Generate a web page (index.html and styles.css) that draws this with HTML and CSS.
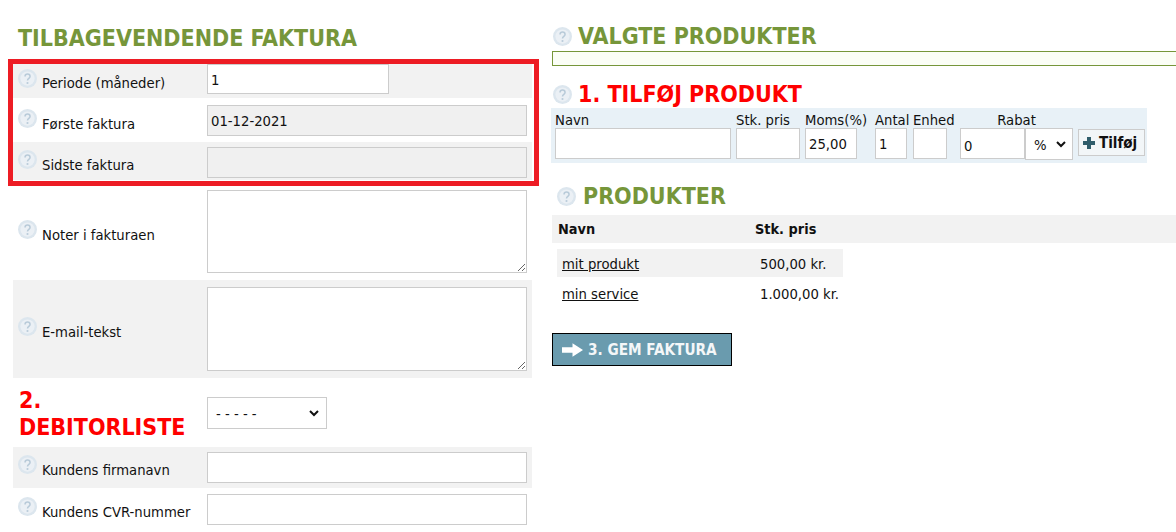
FILE: index.html
```html
<!DOCTYPE html>
<html lang="da">
  <head>
    <meta charset="UTF-8" />
    <meta name="viewport" content="width=device-width, initial-scale=1.0" />
    <title>Tilbagevendende faktura</title>
    <link rel="stylesheet" href="styles.css">
  </head>
  <body>
    <svg class="defs" width="0" height="0">
      <symbol id="help" viewBox="0 0 20 20">
        <circle cx="10" cy="10" r="10" fill="#dce6ee" />
        <circle cx="10" cy="10" r="7.500" fill="#ebf0f5" />
        <path d="M7.400 7.900c0-3.400 5.300-3.400 5.300 0 0 2-2.700 2-2.700 4.200" fill="none" stroke="#b9cbd9" stroke-width="1.600" />
        <circle cx="10" cy="14.700" r="1.100" fill="#b9cbd9" />
      </symbol>
    </svg>
    <div class="page">
      <div class="left">
        <h2 class="title title-left">TILBAGEVENDENDE FAKTURA</h2>
        <div class="row gray row-1">
          <div class="label"><svg class="help"><use href="#help" /></svg><span>Periode (måneder)</span></div>
          <input class="field field-short" type="text" value="1" />
        </div>
        <div class="row row-2">
          <div class="label"><svg class="help"><use href="#help" /></svg><span>Første faktura</span></div>
          <input class="field locked" type="text" value="01-12-2021" disabled />
        </div>
        <div class="row gray row-3">
          <div class="label"><svg class="help"><use href="#help" /></svg><span>Sidste faktura</span></div>
          <input class="field locked" type="text" disabled />
        </div>
        <div class="row row-4">
          <div class="label"><svg class="help"><use href="#help" /></svg><span>Noter i fakturaen</span></div>
          <textarea class="field area"></textarea>
        </div>
        <div class="row gray row-5">
          <div class="label"><svg class="help"><use href="#help" /></svg><span>E-mail-tekst</span></div>
          <textarea class="field area"></textarea>
        </div>
        <div class="row row-debtor">
          <h2 class="title title-red title-debtor">2. DEBITORLISTE</h2>
          <select class="debtor-select"><option>- - - - -</option></select>
        </div>
        <div class="row gray row-6">
          <div class="label"><svg class="help"><use href="#help" /></svg><span>Kundens firmanavn</span></div>
          <input class="field" type="text" />
        </div>
        <div class="row row-7">
          <div class="label"><svg class="help"><use href="#help" /></svg><span>Kundens CVR-nummer</span></div>
          <input class="field" type="text" />
        </div>
        <div class="red-box"></div>
      </div>

      <div class="right">
        <div class="head head-valgte">
          <svg class="help"><use href="#help" /></svg>
          <h2 class="title">VALGTE PRODUKTER</h2>
        </div>
        <div class="selected-bar"></div>
        <div class="head head-add">
          <svg class="help"><use href="#help" /></svg>
          <h2 class="title title-red">1. TILFØJ PRODUKT</h2>
        </div>
        <div class="add-form">
          <div class="col col-navn"><span>Navn</span><input type="text" /></div>
          <div class="col col-pris"><span>Stk. pris</span><input type="text" /></div>
          <div class="col col-moms"><span>Moms(%)</span><input type="text" value="25,00" /></div>
          <div class="col col-antal"><span>Antal</span><input type="text" value="1" /></div>
          <div class="col col-enhed"><span>Enhed</span><input type="text" /></div>
          <div class="col col-rabat">
            <span>Rabat</span>
            <div class="rabat-inputs">
              <input type="text" value="0" />
              <select class="chevron"><option>%</option></select>
            </div>
          </div>
          <button class="add-btn">
            <svg class="plus" viewBox="0 0 12 12"><path d="M4 0h4v4h4v4H8v4H4V8H0V4h4z" /></svg>
            Tilføj
          </button>
        </div>
        <div class="head head-products">
          <svg class="help"><use href="#help" /></svg>
          <h2 class="title">PRODUKTER</h2>
        </div>
        <div class="products-head">
          <span class="name-col">Navn</span>
          <span>Stk. pris</span>
        </div>
        <div class="product gray">
          <a class="name-col" href="#">mit produkt</a>
          <span>500,00 kr.</span>
        </div>
        <div class="product">
          <a class="name-col" href="#">min service</a>
          <span>1.000,00 kr.</span>
        </div>
        <button class="save-btn">
          <svg class="arrow" viewBox="0 0 22 14"><path d="M0 4h11V0l11 7-11 7v-4H0z" /></svg>
          3. GEM FAKTURA
        </button>
      </div>
    </div>
  </body>
</html>
```

FILE: styles.css
```css
* {
  box-sizing: border-box;
}
body {
  margin: 0;
  background: #fff;
  color: #111;
  font-family: "DejaVu Sans Condensed", "DejaVu Sans", sans-serif;
  font-size: 14.7px;
  height: 532px;
  overflow: hidden;
}
.defs {
  position: absolute;
}
.page {
  display: flex;
}
.left {
  position: relative;
  width: 519px;
  margin-left: 13px;
  flex: none;
}
.right {
  flex: 1;
  margin-left: 20px;
  min-width: 0;
}
.title {
  margin: 0;
  font-size: 23px;
  line-height: 27px;
  font-weight: bold;
  color: #76963a;
}
.title-red {
  color: #f00;
}
.title-left {
  padding: 25px 0 0 5px;
  height: 64px;
}
.help {
  width: 19px;
  height: 19px;
  flex: none;
}

.row {
  display: flex;
  align-items: flex-start;
  padding-left: 194px;
  position: relative;
}
.gray {
  background: #f2f2f2;
}
.label {
  position: absolute;
  left: 5px;
  top: 0;
  bottom: 0;
  display: flex;
  align-items: center;
  gap: 5px;
  padding-top: 5px;
}
.label .help {
  margin-bottom: 8px;
}
.label span {
  padding-top: 1px;
}
.row-1 {
  padding-bottom: 4px;
}
.row-1 .label {
  padding-top: 2px;
}
.row-2 {
  padding-top: 7px;
  padding-bottom: 6px;
}
.row-3 {
  padding-top: 5px;
  padding-bottom: 2px;
}
.row-4 {
  padding-top: 10px;
  padding-bottom: 7px;
}
.row-4 .label {
  padding-top: 7px;
}
.row-5 {
  padding-top: 7px;
  padding-bottom: 7px;
}
.row-5 .label {
  padding-top: 3px;
}
.row-debtor {
  height: 69px;
  padding-top: 19px;
}
.row-6 {
  padding-top: 5px;
  padding-bottom: 5px;
}
.row-6 .label {
  padding-top: 2px;
}
.row-7 {
  padding-top: 6px;
  padding-bottom: 8px;
}
.row-7 .label {
  padding-top: 0;
}
.title-debtor {
  position: absolute;
  left: 6px;
  top: 9px;
  width: 185px;
}
.field {
  width: 320px;
  height: 31px;
  border: 1px solid #ccc;
  background: #fff;
  padding: 0 3px;
  font: inherit;
  color: #111;
  border-radius: 0;
  outline: none;
}
.field-short {
  width: 182px;
  height: 30px;
}
.locked {
  background: #f0f0f0;
}
.area {
  height: 83px;
  display: block;
}
.row-5 .area {
  height: 84px;
}
.debtor-select,
.chevron {
  appearance: none;
  border: 1px solid #ccc;
  background-color: #fff;
  background-image: url("data:image/svg+xml,%3Csvg xmlns='http://www.w3.org/2000/svg' viewBox='0 0 10 7'%3E%3Cpath d='M1 1l4 4 4-4' fill='none' stroke='%23111' stroke-width='2'/%3E%3C/svg%3E");
  background-repeat: no-repeat;
  background-size: 10px 7px;
  font: inherit;
  color: #111;
  border-radius: 0;
}
.debtor-select {
  width: 120px;
  height: 32px;
  padding-left: 8px;
  background-position: right 7px center;
}

.red-box {
  position: absolute;
  left: -5px;
  top: 59px;
  width: 531px;
  height: 127px;
  border: 5px solid #ed1c24;
  pointer-events: none;
}

.head {
  display: flex;
  align-items: center;
  gap: 6px;
  padding-left: 1px;
}
.head-valgte {
  height: 27px;
  margin-top: 23px;
}
.selected-bar {
  height: 15px;
  margin-top: 1px;
  border: 1px solid #76963a;
  border-right: 0;
  background: #fbfef6;
}
.head-add {
  height: 27px;
  margin-top: 15px;
}
.add-form {
  display: flex;
  align-items: flex-start;
  width: 596px;
  height: 55px;
  margin-left: -1px;
  background: #e8f1f7;
  padding: 3px 0 0 4px;
}
.col {
  display: flex;
  flex-direction: column;
  line-height: 17px;
  white-space: nowrap;
}
.col input {
  height: 31px;
  width: 100%;
  border: 1px solid #ccc;
  background: #fff;
  font: inherit;
  color: #111;
  padding: 0 3px;
  border-radius: 0;
  outline: none;
}
.col-navn {
  width: 176px;
}
.col-pris {
  width: 64px;
  margin-left: 5px;
}
.col-moms {
  width: 52px;
  margin-left: 5px;
}
.col-antal {
  width: 32px;
  margin-left: 18px;
}
.col-enhed {
  width: 34px;
  margin-left: 6px;
}
.col-rabat {
  width: 113px;
  margin-left: 13px;
  align-items: center;
}
.rabat-inputs {
  display: flex;
  width: 100%;
}
.col-rabat input {
  width: 65px;
  flex: none;
  padding-top: 4px;
}
.chevron {
  width: 48px;
  height: 32px;
  flex: none;
  padding-left: 8px;
  background-position: right 6px center;
}
.add-btn {
  display: flex;
  align-items: center;
  gap: 4px;
  width: 67px;
  height: 27px;
  margin: 18px 0 0 5px;
  padding: 0 0 0 4px;
  border: 1px solid #ccc;
  background: #f2f6f8;
  color: #111;
  font-family: inherit;
  font-size: 15px;
  font-weight: bold;
  white-space: nowrap;
}
.plus {
  width: 12px;
  height: 12px;
  fill: #2f5d6b;
  flex: none;
}
.head-products {
  height: 27px;
  margin-top: 20px;
  margin-left: 4px;
  gap: 7px;
}
.products-head {
  display: flex;
  align-items: center;
  height: 28px;
  margin-top: 5px;
  padding-left: 6px;
  background: #f2f2f2;
  font-weight: bold;
  font-size: 14.4px;
}
.products-head .name-col {
  width: 197px;
}
.product {
  display: flex;
  align-items: center;
  width: 286px;
  height: 28px;
  margin-left: 5px;
  padding-left: 5px;
}
.product.gray {
  margin-top: 6px;
}
.product + .product {
  margin-top: 2px;
}
.product .name-col {
  width: 198px;
  color: #111;
}
.save-btn {
  display: flex;
  align-items: center;
  gap: 5px;
  width: 180px;
  height: 33px;
  margin-top: 26px;
  padding: 0 0 0 9px;
  border: 1px solid #000;
  background: #6a9bae;
  color: #f4f7f8;
  font-family: inherit;
  font-size: 15.2px;
  font-weight: bold;
  white-space: nowrap;
}
.arrow {
  width: 21px;
  height: 14px;
  fill: #fff;
  flex: none;
}
```
